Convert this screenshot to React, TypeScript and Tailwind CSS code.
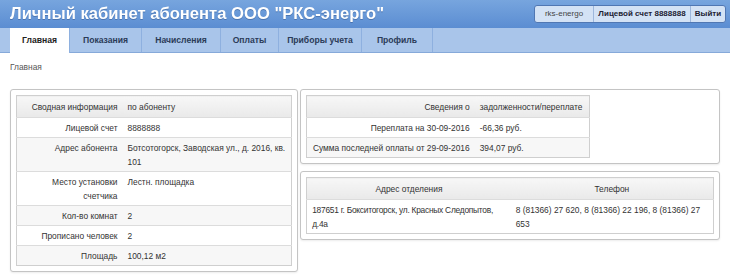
const tabs: [string, string][] = [
  ["Главная", "w-[60px]"],
  ["Показания", "w-[72px]"],
  ["Начисления", "w-[79px]"],
  ["Оплаты", "w-[58px]"],
  ["Приборы учета", "w-[83px]"],
  ["Профиль", "w-[71px]"],
];

const abonent: [string, string][] = [
  ["Лицевой счет", "8888888"],
  ["Адрес абонента", "Ботсотогорск, Заводская ул., д. 2016, кв. 101"],
  ["Место установки счетчика", "Лестн. площадка"],
  ["Кол-во комнат", "2"],
  ["Прописано человек", "2"],
  ["Площадь", "100,12 м2"],
];

const debt: [string, string][] = [
  ["Переплата на 30-09-2016", "-66,36 руб."],
  ["Сумма последней оплаты от 29-09-2016", "394,07 руб."],
];

const th = "pt-[4px] pb-[3px] px-[5px] leading-[14px] font-normal text-[#333] bg-gradient-to-b from-[#f7f7f7] to-[#e9e9e9]";
const td = "pt-[3px] pb-[2px] px-[5px] leading-[14px] align-top border-t border-[#dcdcdc]";

const Panel = ({ children, className = "" }: { children: React.ReactNode; className?: string }) => (
  <div className={"border border-[#c4c4c4] rounded-[3px] p-[5px] bg-white shadow-[0_1px_2px_rgba(0,0,0,0.08)] " + className}>
    {children}
  </div>
);

export default function App() {
  return (
    <div className="w-[730px] h-[278px] bg-white text-[8.4px] text-[#333] overflow-hidden font-['Liberation_Sans',Arial,sans-serif]">
      <div className="h-[28px] flex items-center justify-between px-[10px] bg-gradient-to-b from-[#77a5de] to-[#5b8dd2]">
        <span className="text-white font-bold text-[16.6px] drop-shadow-[0_1px_0_rgba(40,70,120,0.4)]">
          Личный кабинет абонента ООО "РКС-энерго"
        </span>
        <div className="flex h-[18px] mr-[-6px] border border-[#5077b3] rounded-[3px] overflow-hidden bg-[#d3e2f5] text-[8px]">
          <span className="w-[59px] flex items-center justify-center text-[#444] border-r border-[#9db7dc]">rks-energo</span>
          <span className="w-[97px] flex items-center justify-center font-bold text-[#223] border-r border-[#9db7dc]">Лицевой счет 8888888</span>
          <span className="w-[34px] flex items-center justify-center font-bold text-[#223]">Выйти</span>
        </div>
      </div>

      <div className="h-[25px] flex pl-[10px] bg-[#a9c5ea] border-b border-[#86a9d9]">
        {tabs.map(([t, w], i) => (
          <div
            key={t}
            className={
              w +
              " flex items-center justify-center font-bold text-[8.6px] border-r border-[#8eb0df] " +
              (i === 0 ? "bg-white text-[#222] h-[25px] -mb-px" : "text-[#2b3b58]")
            }
          >
            {t}
          </div>
        ))}
      </div>

      <div className="px-[10px]">
        <div className="pt-[7px] leading-[14px] text-[#555]">Главная</div>

        <div className="flex gap-[2px] mt-[15px] items-start">
          <Panel className="w-[289px]">
            <table className="w-full table-fixed border border-[#cfcfcf] border-collapse">
              <thead>
                <tr>
                  <th className={th + " text-right w-[106px]"}>Сводная информация</th>
                  <th className={th + " text-left"}>по абоненту</th>
                </tr>
              </thead>
              <tbody>
                {abonent.map(([k, v], i) => (
                  <tr key={k} className={i % 2 === 1 ? "bg-[#f7f7f7]" : "bg-white"}>
                    <td className={td + " text-right"}>{k}</td>
                    <td className={td}>{v}</td>
                  </tr>
                ))}
              </tbody>
            </table>
          </Panel>

          <div className="flex flex-col gap-[7px] w-[421px]">
            <Panel>
              <table className="w-[284px] table-fixed border border-[#cfcfcf] border-collapse">
                <thead>
                  <tr>
                    <th className={th + " text-right w-[168px]"}>Сведения о</th>
                    <th className={th + " text-left"}>задолженности/переплате</th>
                  </tr>
                </thead>
                <tbody>
                  {debt.map(([k, v], i) => (
                    <tr key={k} className={i % 2 === 1 ? "bg-[#f7f7f7]" : "bg-white"}>
                      <td className={td + " text-right whitespace-nowrap"}>{k}</td>
                      <td className={td}>{v}</td>
                    </tr>
                  ))}
                </tbody>
              </table>
            </Panel>

            <Panel>
              <table className="w-full table-fixed border border-[#cfcfcf] border-collapse">
                <thead>
                  <tr>
                    <th className={th + " text-center w-[204px]"}>Адрес отделения</th>
                    <th className={th + " text-center"}>Телефон</th>
                  </tr>
                </thead>
                <tbody>
                  <tr className="bg-white">
                    <td className={td + " tracking-[-0.25px]"}>
                      187651 г. Бокситогорск, ул. Красных Следопытов, д.4а
                    </td>
                    <td className={td}>8 (81366) 27 620, 8 (81366) 22 196, 8 (81366) 27 653</td>
                  </tr>
                </tbody>
              </table>
            </Panel>
          </div>
        </div>
      </div>
    </div>
  );
}
